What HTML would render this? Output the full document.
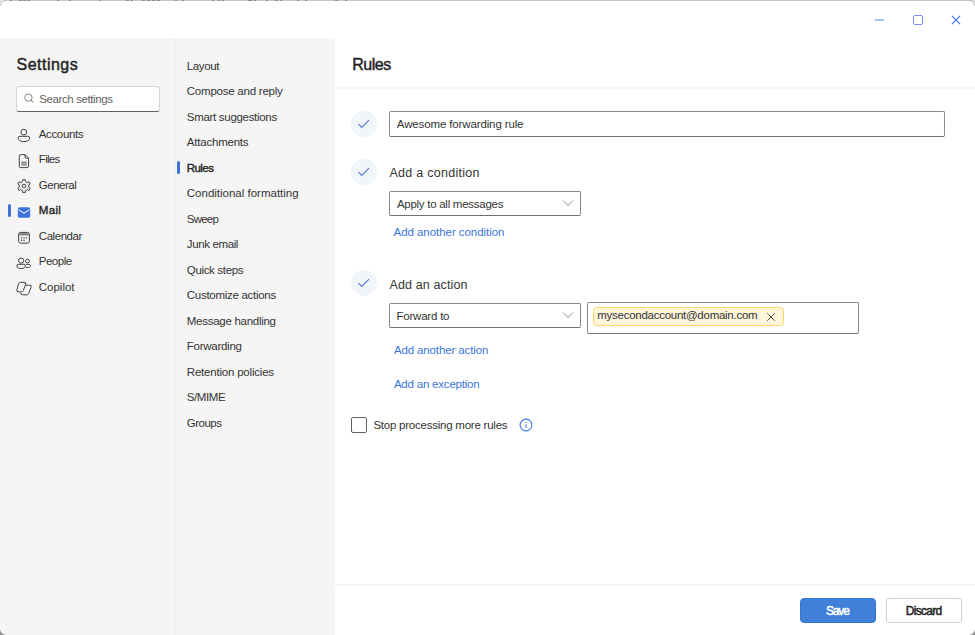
<!DOCTYPE html>
<html><head><meta charset="utf-8">
<style>
*{margin:0;padding:0;box-sizing:border-box}
html,body{width:975px;height:635px;overflow:hidden;background:#fff}
body{position:relative;font-family:"Liberation Sans",sans-serif;color:#333}
.a{position:absolute;white-space:nowrap;line-height:1}
.ico{position:absolute}
.circ{position:absolute;width:26px;height:26px;border-radius:50%;background:#f2f5fa}
.box{position:absolute;border:1px solid #8a8a8a;border-bottom-color:#707070;border-radius:2px;background:#fff}
.lk{color:#3b75dc}
</style></head><body>
<div class="a" style="left:0;top:0;width:975px;height:1px;background:#c6c6c6"></div>
<div class="a" style="left:875px;top:19px;width:9px;height:1.5px;background:#a9bff7"></div>
<div class="a" style="left:913px;top:15px;width:9.6px;height:9.6px;border:1.3px solid #6f95f7;border-radius:2px"></div>
<svg class="ico" style="left:951px;top:15px" width="10" height="10" viewBox="0 0 10 10"><path d="M1 1L9 9M9 1L1 9" stroke="#4a7cf7" stroke-width="1.1"/></svg>
<div class="a" style="left:0;top:38px;width:175px;height:597px;background:#f5f5f5"></div>
<div class="a" style="left:174px;top:38px;width:2px;height:597px;background:#efefef"></div>
<div class="a" style="left:176px;top:38px;width:159px;height:597px;background:#f5f5f5"></div>
<div class="a" style="left:335px;top:87px;width:640px;height:2px;background:#f5f5f5"></div>
<div class="a" style="left:335px;top:584px;width:640px;height:2px;background:#f5f5f5"></div>
<div class="a" style="left:10px;top:0;width:2px;height:1px;background:#8e8e8e"></div><div class="a" style="left:19px;top:0;width:3px;height:1px;background:#8e8e8e"></div><div class="a" style="left:23px;top:0;width:3px;height:1px;background:#8e8e8e"></div><div class="a" style="left:27px;top:0;width:3px;height:1px;background:#8e8e8e"></div><div class="a" style="left:57px;top:0;width:2px;height:1px;background:#8e8e8e"></div><div class="a" style="left:69px;top:0;width:2px;height:1px;background:#8e8e8e"></div><div class="a" style="left:99px;top:0;width:2px;height:1px;background:#8e8e8e"></div><div class="a" style="left:126px;top:0;width:3px;height:1px;background:#8e8e8e"></div><div class="a" style="left:131px;top:0;width:2px;height:1px;background:#8e8e8e"></div><div class="a" style="left:142px;top:0;width:3px;height:1px;background:#8e8e8e"></div><div class="a" style="left:147px;top:0;width:3px;height:1px;background:#8e8e8e"></div><div class="a" style="left:152px;top:0;width:3px;height:1px;background:#8e8e8e"></div><div class="a" style="left:157px;top:0;width:3px;height:1px;background:#8e8e8e"></div><div class="a" style="left:175px;top:0;width:2px;height:1px;background:#8e8e8e"></div><div class="a" style="left:182px;top:0;width:2px;height:1px;background:#8e8e8e"></div><div class="a" style="left:212px;top:0;width:2px;height:1px;background:#8e8e8e"></div><div class="a" style="left:218px;top:0;width:2px;height:1px;background:#8e8e8e"></div><div class="a" style="left:222px;top:0;width:2px;height:1px;background:#8e8e8e"></div><div class="a" style="left:248px;top:0;width:4px;height:1px;background:#8e8e8e"></div><div class="a" style="left:254px;top:0;width:2px;height:1px;background:#8e8e8e"></div><div class="a" style="left:266px;top:0;width:2px;height:1px;background:#8e8e8e"></div><div class="a" style="left:275px;top:0;width:3px;height:1px;background:#8e8e8e"></div><div class="a" style="left:280px;top:0;width:2px;height:1px;background:#8e8e8e"></div><div class="a" style="left:297px;top:0;width:2px;height:1px;background:#8e8e8e"></div><div class="a" style="left:305px;top:0;width:2px;height:1px;background:#8e8e8e"></div><div class="a" style="left:335px;top:0;width:3px;height:1px;background:#8e8e8e"></div><div class="a" style="left:345px;top:0;width:2px;height:1px;background:#8e8e8e"></div>
<svg class="ico" style="left:0;top:0" width="10" height="10" viewBox="0 0 10 10"><path d="M0 0H6A6 6 0 0 0 0 6Z" fill="#e6e6ea"/><path d="M6 0.5A5.5 5.5 0 0 0 0.5 6" fill="none" stroke="#c4c4c4" stroke-width="1"/></svg>
<svg class="ico" style="left:965px;top:0" width="10" height="10" viewBox="0 0 10 10"><path d="M10 0H4A6 6 0 0 1 10 6Z" fill="#dcdce0"/><path d="M4 0.5A5.5 5.5 0 0 1 9.5 6" fill="none" stroke="#bcbcbc" stroke-width="1"/></svg>
<svg class="ico" style="left:0;top:625px" width="10" height="10" viewBox="0 0 10 10"><path d="M0 10V4A6 6 0 0 0 6 10Z" fill="#8c8c8c"/></svg>
<svg class="ico" style="left:965px;top:625px" width="10" height="10" viewBox="0 0 10 10"><path d="M10 10V4A6 6 0 0 1 4 10Z" fill="#8c8c8c"/></svg>
<div class="a " style="left:16.60px;top:56.86px;font-size:16px;letter-spacing:0.470px;-webkit-text-stroke:0.45px #242424;color:#242424">Settings</div>
<div class="a" style="left:16px;top:86px;width:143.5px;height:25.5px;background:#fff;border:1px solid #d6d6d6;border-bottom-color:#616161;border-radius:3px"></div>
<svg class="ico" style="left:24px;top:93px" width="11" height="11" viewBox="0 0 11 11"><circle cx="4.4" cy="4.6" r="3.7" fill="none" stroke="#858585" stroke-width="1"/><path d="M7.1 7.3L9.2 9.4" stroke="#858585" stroke-width="1.1"/></svg>
<div class="a " style="left:39.30px;top:93.57px;font-size:11.5px;letter-spacing:-0.398px;color:#616161">Search settings</div>
<div class="a " style="left:38.80px;top:129.07px;font-size:11.5px;letter-spacing:-0.371px">Accounts</div>
<div class="a " style="left:38.80px;top:154.37px;font-size:11.5px;letter-spacing:-0.694px">Files</div>
<div class="a " style="left:38.80px;top:180.27px;font-size:11.5px;letter-spacing:-0.486px">General</div>
<div class="a " style="left:38.80px;top:205.37px;font-size:11.5px;letter-spacing:0.303px;-webkit-text-stroke:0.4px #242424;color:#242424">Mail</div>
<div class="a " style="left:38.80px;top:230.87px;font-size:11.5px;letter-spacing:-0.452px">Calendar</div>
<div class="a " style="left:38.80px;top:255.97px;font-size:11.5px;letter-spacing:-0.502px">People</div>
<div class="a " style="left:38.80px;top:281.77px;font-size:11.5px;letter-spacing:-0.017px">Copilot</div>
<svg class="ico" style="left:0;top:0" width="40" height="300" viewBox="0 0 40 300" fill="none" stroke="#424242" stroke-width="1" stroke-linejoin="round">
<circle cx="23.8" cy="132.2" r="2.9"/>
<path d="M20 136.3H27.8A1.9 1.9 0 0 1 29.7 138.2C29.7 140.4 27.3 141.6 23.9 141.6C20.5 141.6 18.1 140.4 18.1 138.2A1.9 1.9 0 0 1 20 136.3Z"/>
<path d="M20.9 154.6H25L28.6 158.2V166A1.6 1.6 0 0 1 27 167.6H20.9A1.6 1.6 0 0 1 19.3 166V156.2A1.6 1.6 0 0 1 20.9 154.6Z"/>
<path d="M25 154.8V157A1.2 1.2 0 0 0 26.2 158.2H28.4"/>
<rect x="21.2" y="161.4" width="5.6" height="4.3" fill="#9c9c9c" stroke="none"/>
<path d="M21.65 182.03 L22.63 181.61 L22.74 179.62 L25.26 179.62 L25.37 181.61 L26.35 182.03 L27.21 182.66 L28.98 181.77 L30.24 183.95 L28.58 185.04 L28.70 186.10 L28.58 187.16 L30.24 188.25 L28.98 190.43 L27.21 189.54 L26.35 190.17 L25.37 190.59 L25.26 192.58 L22.74 192.58 L22.63 190.59 L21.65 190.17 L20.79 189.54 L19.02 190.43 L17.76 188.25 L19.42 187.16 L19.30 186.10 L19.42 185.04 L17.76 183.95 L19.02 181.77 L20.79 182.66Z"/>
<circle cx="24" cy="186.1" r="1.8"/>
<rect x="17.8" y="207.2" width="12.4" height="10.5" rx="2" fill="#3b73d8" stroke="none"/>
<path d="M18.3 209.6L24 213.3L29.7 209.6" stroke="#fff" stroke-width="1"/>
<rect x="18.6" y="232.4" width="10.8" height="10.8" rx="2"/>
<rect x="19" y="233" width="10" height="2.5" fill="#8a8a8a" stroke="none"/>
<g fill="#424242" stroke="none"><rect x="20.9" y="237.2" width="1.3" height="1.3"/><rect x="23.4" y="237.2" width="1.3" height="1.3"/><rect x="25.9" y="237.2" width="1.3" height="1.3"/><rect x="20.9" y="239.6" width="1.3" height="1.3"/><rect x="23.4" y="239.6" width="1.3" height="1.3"/></g>
<circle cx="21.1" cy="260.6" r="2.6"/>
<path d="M18.4 264.3H23.9A1.6 1.6 0 0 1 25.5 265.9C25.5 267.6 23.6 268.6 21.15 268.6C18.7 268.6 16.8 267.6 16.8 265.9A1.6 1.6 0 0 1 18.4 264.3Z"/>
<circle cx="27.5" cy="261.1" r="1.9"/>
<path d="M26.2 264.4H29.2A1.3 1.3 0 0 1 30.5 265.7C30.5 266.9 29.3 267.6 27.7 267.6C27 267.6 26.4 267.5 25.9 267.3"/>
<path d="M20.4 282.3H24.3A1.6 1.6 0 0 1 25.8 284.4L23.2 290.6A1.9 1.9 0 0 1 21.4 291.8H18.4A1.6 1.6 0 0 1 16.9 289.7L18.6 283.6A1.9 1.9 0 0 1 20.4 282.3Z"/>
<path d="M26.3 285.2H29.6A1.6 1.6 0 0 1 31.1 287.3L28.6 293.5A1.9 1.9 0 0 1 26.8 294.8H22.4A1.6 1.6 0 0 1 20.9 292.7"/>
<path d="M24.9 283.1C25.3 284.3 25.7 285 26.3 285.2"/>
</svg>
<div class="a" style="left:8px;top:204px;width:3px;height:13px;background:#3b73d8;border-radius:2px"></div>
<div class="a " style="left:186.80px;top:60.57px;font-size:11.5px;letter-spacing:-0.385px">Layout</div>
<div class="a " style="left:186.80px;top:86.07px;font-size:11.5px;letter-spacing:-0.232px">Compose and reply</div>
<div class="a " style="left:186.80px;top:111.57px;font-size:11.5px;letter-spacing:-0.303px">Smart suggestions</div>
<div class="a " style="left:186.80px;top:137.07px;font-size:11.5px;letter-spacing:-0.212px">Attachments</div>
<div class="a " style="left:186.80px;top:162.57px;font-size:11.5px;letter-spacing:-0.576px;-webkit-text-stroke:0.4px #242424;color:#242424">Rules</div>
<div class="a " style="left:186.80px;top:188.07px;font-size:11.5px;letter-spacing:-0.003px">Conditional formatting</div>
<div class="a " style="left:186.80px;top:213.57px;font-size:11.5px;letter-spacing:-0.792px">Sweep</div>
<div class="a " style="left:186.80px;top:239.07px;font-size:11.5px;letter-spacing:-0.374px">Junk email</div>
<div class="a " style="left:186.80px;top:264.57px;font-size:11.5px;letter-spacing:-0.338px">Quick steps</div>
<div class="a " style="left:186.80px;top:290.07px;font-size:11.5px;letter-spacing:-0.285px">Customize actions</div>
<div class="a " style="left:186.80px;top:315.57px;font-size:11.5px;letter-spacing:-0.276px">Message handling</div>
<div class="a " style="left:186.80px;top:341.07px;font-size:11.5px;letter-spacing:-0.269px">Forwarding</div>
<div class="a " style="left:186.80px;top:366.57px;font-size:11.5px;letter-spacing:-0.205px">Retention policies</div>
<div class="a " style="left:186.80px;top:392.07px;font-size:11.5px;letter-spacing:-0.419px">S/MIME</div>
<div class="a " style="left:186.80px;top:417.57px;font-size:11.5px;letter-spacing:-0.522px">Groups</div>
<div class="a" style="left:177px;top:161px;width:3px;height:13px;background:#3b73d8;border-radius:2px"></div>
<div class="a " style="left:352.20px;top:56.86px;font-size:16px;letter-spacing:-0.453px;-webkit-text-stroke:0.45px #242424;color:#242424">Rules</div>
<div class="circ" style="left:350.7px;top:110.6px"></div>
<svg class="ico" style="left:357px;top:118.0px" width="14" height="12" viewBox="0 0 14 12"><path d="M1.5 6.2L4.8 9.4L12 2.2" fill="none" stroke="#4f78d8" stroke-width="1.15"/></svg>
<div class="circ" style="left:350.7px;top:158.6px"></div>
<svg class="ico" style="left:357px;top:166.0px" width="14" height="12" viewBox="0 0 14 12"><path d="M1.5 6.2L4.8 9.4L12 2.2" fill="none" stroke="#4f78d8" stroke-width="1.15"/></svg>
<div class="circ" style="left:350.7px;top:270.0px"></div>
<svg class="ico" style="left:357px;top:277.4px" width="14" height="12" viewBox="0 0 14 12"><path d="M1.5 6.2L4.8 9.4L12 2.2" fill="none" stroke="#4f78d8" stroke-width="1.15"/></svg>
<div class="box" style="left:389px;top:111px;width:556px;height:26px"></div>
<div class="a " style="left:396.80px;top:119.27px;font-size:11.5px;letter-spacing:-0.129px">Awesome forwarding rule</div>
<div class="a " style="left:389.50px;top:166.72px;font-size:12.5px;letter-spacing:0.273px">Add a condition</div>
<div class="box" style="left:389px;top:191px;width:192px;height:25px"></div>
<div class="a " style="left:396.90px;top:198.77px;font-size:11.5px;letter-spacing:-0.268px">Apply to all messages</div>
<svg class="ico" style="left:562px;top:199px" width="12" height="8" viewBox="0 0 12 8"><path d="M1 1.5L6 6.5L11 1.5" fill="none" stroke="#8a8a8a" stroke-width="1"/></svg>
<div class="a lk" style="left:393.50px;top:226.57px;font-size:11.5px;letter-spacing:-0.045px">Add another condition</div>
<div class="a " style="left:389.50px;top:278.92px;font-size:12.5px;letter-spacing:0.129px">Add an action</div>
<div class="box" style="left:389px;top:303px;width:192px;height:25px"></div>
<div class="a " style="left:396.50px;top:310.67px;font-size:11.5px;letter-spacing:-0.218px">Forward to</div>
<svg class="ico" style="left:562px;top:311px" width="12" height="8" viewBox="0 0 12 8"><path d="M1 1.5L6 6.5L11 1.5" fill="none" stroke="#8a8a8a" stroke-width="1"/></svg>
<div class="box" style="left:587px;top:302px;width:272px;height:32px"></div>
<div class="a" style="left:593.3px;top:307.3px;width:191px;height:18.6px;background:#fff6dc;border:1px solid #fbd669;border-radius:3.5px"></div>
<div class="a " style="left:597.30px;top:310.47px;font-size:11.5px;letter-spacing:-0.268px">mysecondaccount@domain.com</div>
<svg class="ico" style="left:766px;top:312px" width="10" height="10" viewBox="0 0 10 10"><path d="M1.2 1.2L8.8 8.8M8.8 1.2L1.2 8.8" stroke="#555" stroke-width="1"/></svg>
<div class="a lk" style="left:393.90px;top:345.17px;font-size:11.5px;letter-spacing:-0.126px">Add another action</div>
<div class="a lk" style="left:393.90px;top:378.67px;font-size:11.5px;letter-spacing:-0.205px">Add an exception</div>
<div class="a" style="left:351px;top:417px;width:16px;height:16px;border:1px solid #616161;border-radius:2px;background:#fff"></div>
<div class="a " style="left:373.40px;top:419.87px;font-size:11.5px;letter-spacing:-0.231px">Stop processing more rules</div>
<svg class="ico" style="left:519.4px;top:417.8px" width="14" height="14" viewBox="0 0 14 14"><circle cx="7" cy="7" r="5.9" fill="none" stroke="#3b78e6" stroke-width="1.1"/><path d="M7 6.2v3.8" stroke="#3b78e6" stroke-width="1"/><circle cx="7" cy="4.4" r="0.65" fill="#3b78e6"/></svg>
<div class="a" style="left:799.5px;top:597.7px;width:76.5px;height:25.2px;background:#4180d8;border:1px solid #3174d6;border-radius:4px"></div>
<div class="a " style="left:826.00px;top:604.74px;font-size:12px;letter-spacing:-1.183px;color:#fff;-webkit-text-stroke:0.5px #fff">Save</div>
<div class="a" style="left:886px;top:598px;width:76px;height:25px;background:#fff;border:1px solid #d1d1d1;border-radius:3px"></div>
<div class="a " style="left:905.70px;top:604.74px;font-size:12px;letter-spacing:-0.697px;-webkit-text-stroke:0.5px #242424;color:#242424">Discard</div>
</body></html>
